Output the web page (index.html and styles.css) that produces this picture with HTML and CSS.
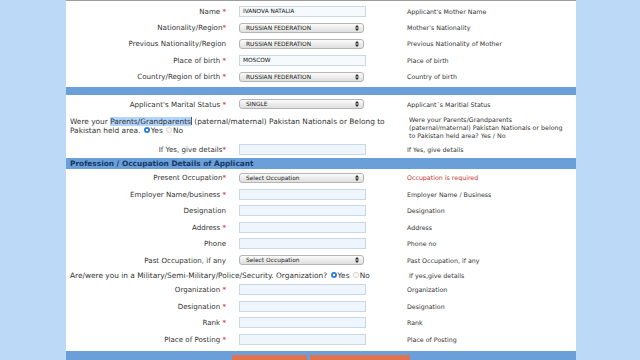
FILE: index.html
```html
<!DOCTYPE html>
<html>
<head>
<meta charset="utf-8">
<link rel="stylesheet" href="styles.css">
</head>
<body>
<div class="panel">
  <div class="rows top">
    <div class="row">
      <div class="lbl">Name <span class="req">*</span></div>
      <div class="ctl"><div class="inp filled">IVANOVA NATALIA</div></div>
      <div class="hint">Applicant's Mother Name</div>
    </div>
    <div class="row">
      <div class="lbl">Nationality/Region<span class="req">*</span></div>
      <div class="ctl"><div class="sel"><span>RUSSIAN FEDERATION</span><svg width="4" height="6" viewBox="0 0 4 6"><path d="M0 2.4L2 0L4 2.4Z M0 3.6L2 6L4 3.6Z" fill="#222"/></svg></div></div>
      <div class="hint">Mother's Nationality</div>
    </div>
    <div class="row">
      <div class="lbl">Previous Nationality/Region</div>
      <div class="ctl"><div class="sel"><span>RUSSIAN FEDERATION</span><svg width="4" height="6" viewBox="0 0 4 6"><path d="M0 2.4L2 0L4 2.4Z M0 3.6L2 6L4 3.6Z" fill="#222"/></svg></div></div>
      <div class="hint">Previous Nationality of Mother</div>
    </div>
    <div class="row">
      <div class="lbl">Place of birth <span class="req">*</span></div>
      <div class="ctl"><div class="inp filled">MOSCOW</div></div>
      <div class="hint">Place of birth</div>
    </div>
    <div class="row">
      <div class="lbl">Country/Region of birth <span class="req">*</span></div>
      <div class="ctl"><div class="sel"><span>RUSSIAN FEDERATION</span><svg width="4" height="6" viewBox="0 0 4 6"><path d="M0 2.4L2 0L4 2.4Z M0 3.6L2 6L4 3.6Z" fill="#222"/></svg></div></div>
      <div class="hint">Country of birth</div>
    </div>
  </div>

  <div class="bar"></div>

  <div class="rows after-bar">
    <div class="row">
      <div class="lbl">Applicant's Marital Status <span class="req">*</span></div>
      <div class="ctl"><div class="sel"><span>SINGLE</span><svg width="4" height="6" viewBox="0 0 4 6"><path d="M0 2.4L2 0L4 2.4Z M0 3.6L2 6L4 3.6Z" fill="#222"/></svg></div></div>
      <div class="hint">Applicant´s Maritial Status</div>
    </div>
    <div class="row para-row">
      <div class="para">Were your <span class="selected">Parents/Grandparents</span><span class="caret"></span> (paternal/maternal) Pakistan Nationals or Belong to<br>Pakistan held area. <span class="radio on"></span>Yes <span class="radio"></span>No</div>
      <div class="hint para-hint">Were your Parents/Grandparents<br>(paternal/maternal) Pakistan Nationals or belong<br>to Pakistan held area? Yes / No</div>
    </div>
    <div class="row">
      <div class="lbl">If Yes, give details<span class="req">*</span></div>
      <div class="ctl"><div class="inp"></div></div>
      <div class="hint">If Yes, give details</div>
    </div>
  </div>

  <div class="sect">Profession / Occupation Details of Applicant</div>

  <div class="rows mid">
    <div class="row">
      <div class="lbl">Present Occupation<span class="req">*</span></div>
      <div class="ctl"><div class="sel"><span>Select Occupation</span><svg width="4" height="6" viewBox="0 0 4 6"><path d="M0 2.4L2 0L4 2.4Z M0 3.6L2 6L4 3.6Z" fill="#222"/></svg></div></div>
      <div class="hint err">Occupation is required</div>
    </div>
    <div class="row">
      <div class="lbl">Employer Name/business <span class="req">*</span></div>
      <div class="ctl"><div class="inp"></div></div>
      <div class="hint">Employer Name / Business</div>
    </div>
    <div class="row">
      <div class="lbl">Designation</div>
      <div class="ctl"><div class="inp"></div></div>
      <div class="hint">Designation</div>
    </div>
    <div class="row">
      <div class="lbl">Address <span class="req">*</span></div>
      <div class="ctl"><div class="inp"></div></div>
      <div class="hint">Address</div>
    </div>
    <div class="row">
      <div class="lbl">Phone</div>
      <div class="ctl"><div class="inp"></div></div>
      <div class="hint">Phone no</div>
    </div>
    <div class="row">
      <div class="lbl">Past Occupation, if any</div>
      <div class="ctl"><div class="sel"><span>Select Occupation</span><svg width="4" height="6" viewBox="0 0 4 6"><path d="M0 2.4L2 0L4 2.4Z M0 3.6L2 6L4 3.6Z" fill="#222"/></svg></div></div>
      <div class="hint">Past Occupation, if any</div>
    </div>
    <div class="row mil-row">
      <div class="para">Are/were you in a Military/Semi-Military/Police/Security. Organization? <span class="radio on"></span>Yes <span class="radio"></span>No</div>
      <div class="hint">&nbsp;If yes,give details</div>
    </div>
    <div class="row">
      <div class="lbl">Organization <span class="req">*</span></div>
      <div class="ctl"><div class="inp"></div></div>
      <div class="hint">Organization</div>
    </div>
    <div class="row">
      <div class="lbl">Designation <span class="req">*</span></div>
      <div class="ctl"><div class="inp"></div></div>
      <div class="hint">Designation</div>
    </div>
    <div class="row">
      <div class="lbl">Rank <span class="req">*</span></div>
      <div class="ctl"><div class="inp"></div></div>
      <div class="hint">Rank</div>
    </div>
    <div class="row">
      <div class="lbl">Place of Posting <span class="req">*</span></div>
      <div class="ctl"><div class="inp"></div></div>
      <div class="hint">Place of Posting</div>
    </div>
  </div>

  <div class="foot">
    <div class="btn b1"></div>
    <div class="btn b2"></div>
  </div>
</div>
</body>
</html>
```

FILE: styles.css
```css
html, body {
  margin: 0;
  padding: 0;
}
body {
  background: #bcdaf7;
  font-family: "DejaVu Sans", Verdana, sans-serif;
  color: #333;
  height: 360px;
  overflow: hidden;
}
.panel {
  margin-left: 66px;
  width: 510px;
  background: #fff;
  border-top: 1px solid #9c9c9c;
}
.rows.top {
  padding-top: 2px;
}
.rows.after-bar {
  padding-top: 1px;
}
.rows.mid {
  padding-top: 1px;
}
.row {
  display: grid;
  grid-template-columns: 169px 168px 1fr;
  align-items: center;
  height: 16.4px;
}
.mid .row {
  height: 16.5px;
}
.lbl {
  text-align: right;
  padding-right: 9px;
  font-size: 7.1px;
  white-space: nowrap;
}
.req {
  color: #d02020;
}
.ctl {
  padding-left: 4px;
  display: flex;
}
.hint {
  font-size: 6.3px;
  padding-left: 4px;
  white-space: nowrap;
}
.err {
  color: #c83232;
}
.inp {
  box-sizing: border-box;
  width: 127px;
  height: 11px;
  border: 1px solid #c9d7e6;
  background: #eef5fc;
  font-size: 5.8px;
  padding-left: 3px;
  display: flex;
  align-items: center;
  color: #111;
}
.inp.filled {
  background: #f7fafd;
}
.sel {
  box-sizing: border-box;
  width: 125px;
  height: 10px;
  border: 1px solid #b5b5b5;
  border-radius: 3px;
  background: linear-gradient(#fbfbfb, #dedede);
  font-size: 5.9px;
  padding: 0 4px 0 6px;
  display: flex;
  align-items: center;
  justify-content: space-between;
  color: #222;
}
.bar {
  margin-top: 2px;
  height: 8px;
  background: #6b9fd9;
}
.para-row {
  height: 29px;
  align-items: start;
}
.para {
  grid-column: 1 / 3;
  padding-left: 4px;
  font-size: 7.4px;
  line-height: 9px;
  white-space: nowrap;
}
.para-row .para {
  padding-top: 4.5px;
}
.para-hint {
  line-height: 8px;
  padding-top: 4px;
  padding-left: 6px;
}
.selected {
  background: #b3d4fc;
}
.caret {
  display: inline-block;
  width: 1px;
  height: 8px;
  background: #555;
  vertical-align: -1px;
}
.radio {
  display: inline-block;
  box-sizing: border-box;
  width: 6px;
  height: 6px;
  border-radius: 50%;
  border: 1px solid #d4d4d4;
  background: #fafafa;
  margin: 0 1px 0 1px;
  vertical-align: -0.5px;
}
.radio.on {
  border: none;
  background: radial-gradient(circle, #fff 0 1.1px, #2f7de1 1.4px);
}
.sect {
  height: 11px;
  line-height: 11px;
  background: #6b9fd9;
  color: #163764;
  font-weight: bold;
  font-size: 7.4px;
  padding-left: 4px;
}
.mid .mil-row {
  height: 13px;
}
.foot {
  margin-top: 3px;
  height: 20px;
  background: #6b9fd9;
  display: flex;
  gap: 3px;
  padding: 4px 0 0 166px;
}
.btn {
  background: #e0724e;
  height: 10px;
}
.b1 { width: 75px; }
.b2 { width: 100px; }
```
